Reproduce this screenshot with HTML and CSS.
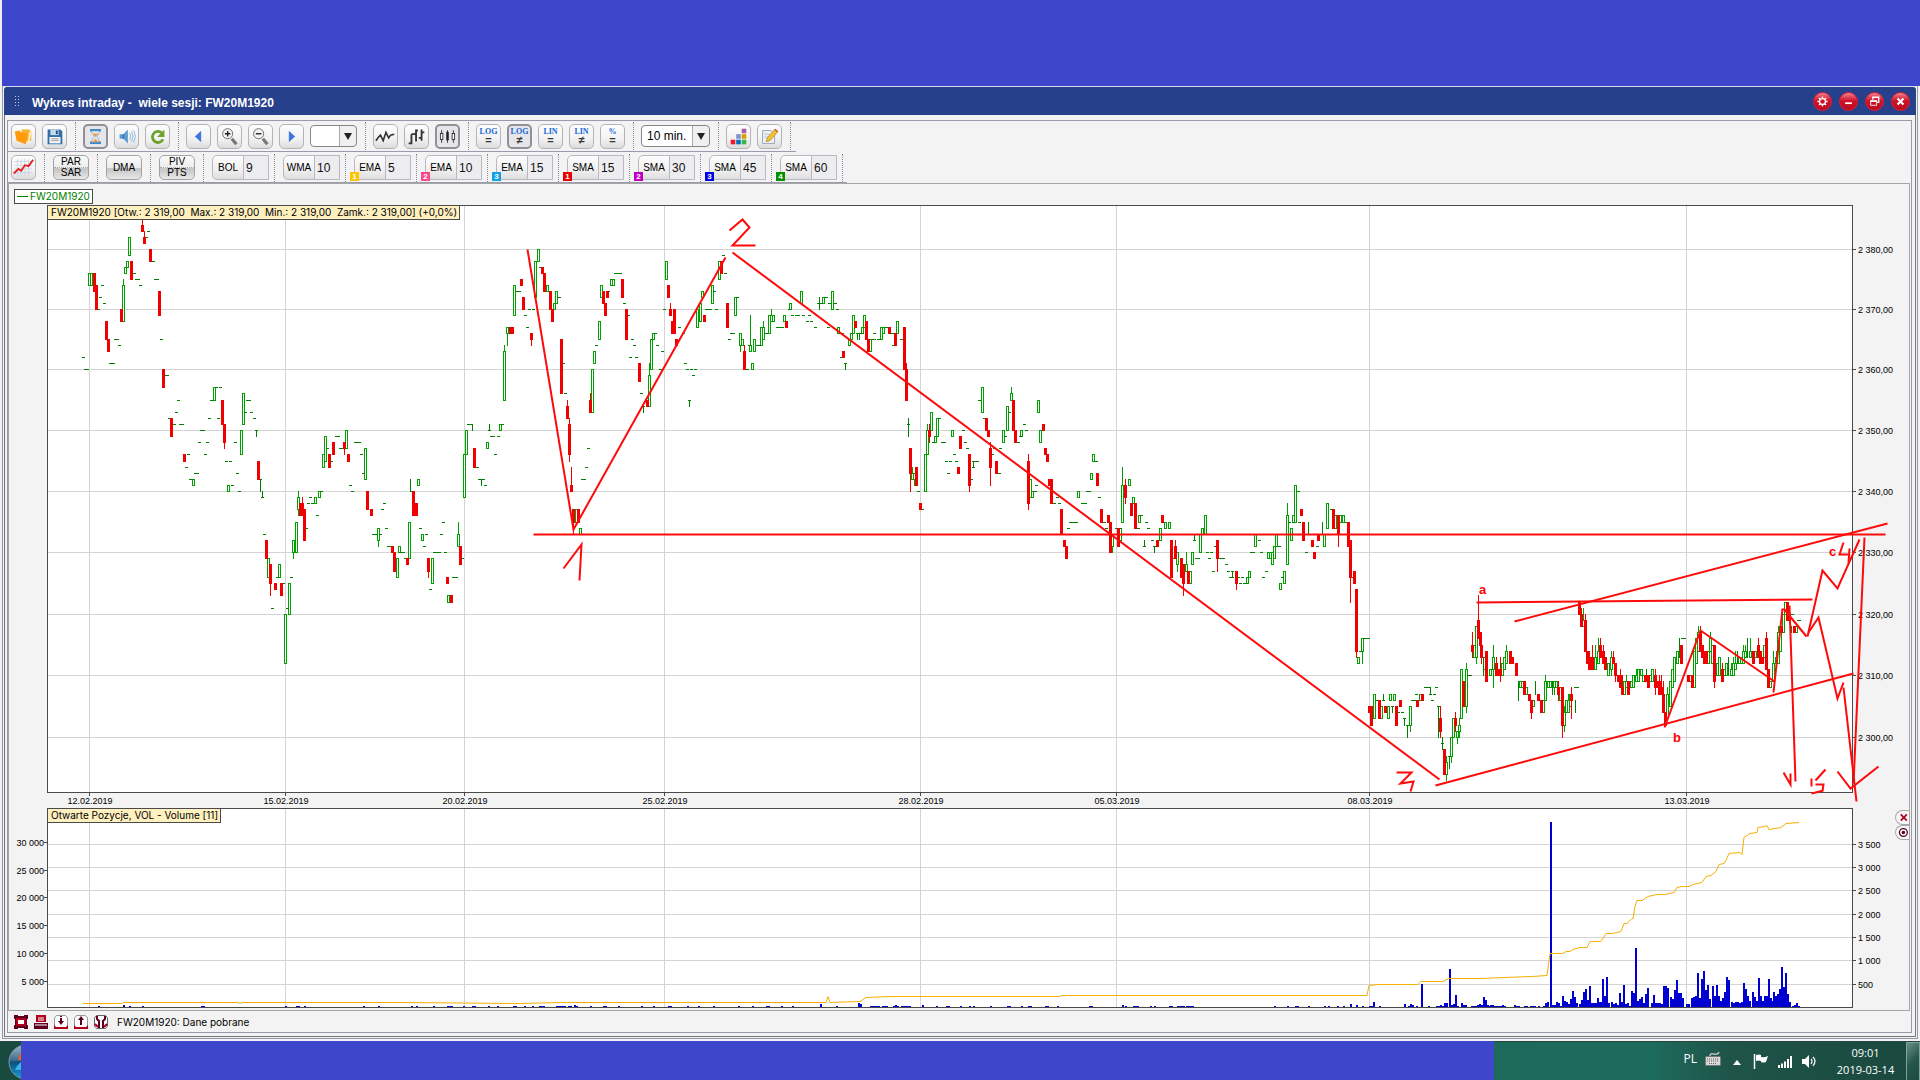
FILE: index.html
```html
<!DOCTYPE html>
<html lang="pl">
<head>
    <meta charset="UTF-8">
    <meta name="viewport" content="width=device-width, initial-scale=1.0">
    <title>Wykres intraday - FW20M1920</title>
    <link rel="stylesheet" href="styles.css">
</head>
<body>
    <div class="banner"></div>

    <main class="window">
        <header class="titlebar">
            <span class="grip"></span>
            <h1 class="title">Wykres intraday -&nbsp; wiele sesji: FW20M1920</h1>
            <button class="round" aria-label="Ustawienia">
                <svg viewBox="0 0 20 20"><circle cx="10" cy="10" r="3.500" fill="none" stroke="#fff" stroke-width="1.500"/><path d="M10 4v3M10 13v3M4 10h3M13 10h3M5.800 5.800l2 2M12.200 12.200l2 2M14.200 5.800l-2 2M7.800 12.200l-2 2" stroke="#fff" stroke-width="1.500"/></svg>
            </button>
            <button class="round" aria-label="Minimalizuj">
                <svg viewBox="0 0 20 20"><path d="M6 12h8" stroke="#fff" stroke-width="2"/></svg>
            </button>
            <button class="round" aria-label="Przywróć">
                <svg viewBox="0 0 20 20"><path d="M8 8V5h7v6h-2" fill="none" stroke="#fff" stroke-width="1.500"/><path d="M5.500 9.500h7v5h-7z" fill="#c8102a" stroke="#fff"/><path d="M5 9.500h8" stroke="#fff" stroke-width="2"/></svg>
            </button>
            <button class="round" aria-label="Zamknij">
                <svg viewBox="0 0 20 20"><path d="M6.500 6.500l7 7M13.500 6.500l-7 7" stroke="#fff" stroke-width="2.500"/></svg>
            </button>
        </header>

        <div class="frame">
            <div class="panel">
                <div class="toolbar">
                    <button class="tool" aria-label="Otwórz">
                        <svg viewBox="0 0 25 25"><path d="M10 5h9l2 3v9l-6 1z" fill="#f7b233"/><path d="M19 7l2 1-2 11-2 1z" fill="#fff3c4"/><path d="M3 7l5-1 2 2 7 1-2 12-10-4z" fill="#ff9a0a"/></svg>
                    </button>
                    <button class="tool" aria-label="Zapisz">
                        <svg viewBox="0 0 25 25"><path d="M5 5h14l2 2v14H5z" fill="#2f6ea8"/><path d="M8 5h9v6H8z" fill="#c5dcee"/><path d="M14 6h2v4h-2z" fill="#244f7b"/><path d="M7 13h12v7H7z" fill="#f4f4f4"/><path d="M9 15h8M9 17h8" stroke="#999"/></svg>
                    </button>
                    <span class="sep"></span>
                    <button class="tool pressed" aria-label="Czas">
                        <svg viewBox="0 0 25 25"><path d="M6 5h13M6 20h13" stroke="#3f86c8" stroke-width="3"/><path d="M8 6h9c0 5-3 5-3 6.500s3 2 3 6.500H8c0-4 3-5 3-6.500S8 11 8 6z" fill="#e4f0f8" stroke="#86a9c6"/><path d="M9 9h7l-3.500 4zM9 19l3.500-4 3.500 4z" fill="#ee9a3a"/></svg>
                    </button>
                    <button class="tool" aria-label="Dźwięk">
                        <svg viewBox="0 0 25 25"><path d="M5 10h4l5-5v15l-5-5H5z" fill="#5e9bd0"/><path d="M9 10v5" stroke="#2c6299"/><path d="M16 9q2 3 0 7M18 7q3 5 0 11M20 6q4 6 0 13" fill="none" stroke="#7db7e2"/></svg>
                    </button>
                    <button class="tool" aria-label="Odśwież">
                        <svg viewBox="0 0 25 25"><path d="M17 8.500a6 6 0 1 0 1.500 7" fill="none" stroke="#6aa22c" stroke-width="3"/><path d="M20 5v8h-8z" fill="#6aa22c"/></svg>
                    </button>
                    <span class="sep"></span>
                    <button class="tool" aria-label="Wstecz">
                        <svg viewBox="0 0 25 25"><path d="M15 7v11l-6-5.500z" fill="#3a76e8" stroke="#1f4cb0" stroke-width=".5"/></svg>
                    </button>
                    <button class="tool" aria-label="Powiększ">
                        <svg viewBox="0 0 25 25"><path d="M15 15l5 6" stroke="#777" stroke-width="3.500"/><circle cx="10.500" cy="9.500" r="5.500" fill="#eef2f5" stroke="#666"/><path d="M7.500 9.500h6M10.500 6.500v6" stroke="#222" stroke-width="1.500"/></svg>
                    </button>
                    <button class="tool" aria-label="Pomniejsz">
                        <svg viewBox="0 0 25 25"><path d="M15 15l5 6" stroke="#777" stroke-width="3.500"/><circle cx="10.500" cy="9.500" r="5.500" fill="#eef2f5" stroke="#666"/><path d="M7.500 9.500h6" stroke="#222" stroke-width="1.500"/></svg>
                    </button>
                    <button class="tool" aria-label="Dalej">
                        <svg viewBox="0 0 25 25"><path d="M10 7v11l6-5.500z" fill="#3a76e8" stroke="#1f4cb0" stroke-width=".5"/></svg>
                    </button>
                    <span class="combo combo-zoom"><select aria-label="Powiększenie"><option></option></select></span>
                    <span class="sep"></span>
                    <button class="tool" aria-label="Liniowy">
                        <svg viewBox="0 0 25 25"><path d="M2 17l3-4 2-2 3 6 3-9 3 6 2-3 4-1" fill="none" stroke="#333" stroke-width="1.800"/></svg>
                    </button>
                    <button class="tool" aria-label="Słupkowy">
                        <svg viewBox="0 0 25 25"><path d="M7 10v11M4 20h3M7 10h2M12 5v13M9 10h3M12 6h2M18 5v12M15 14h3M18 8h3" fill="none" stroke="#333" stroke-width="2"/></svg>
                    </button>
                    <button class="tool pressed" aria-label="Świecowy">
                        <svg viewBox="0 0 25 25"><path d="M5.500 5v15M12.500 5v15M19.500 5v15" stroke="#222"/><rect x="4" y="9" width="3" height="7" fill="#fff" stroke="#222"/><rect x="11" y="7" width="3" height="10" fill="#222"/><rect x="18" y="9" width="3" height="7" fill="#fff" stroke="#222"/></svg>
                    </button>
                    <span class="sep"></span>
                    <button class="tool scale"><b>LOG</b><i>=</i></button>
                    <button class="tool scale pressed"><b>LOG</b><i>≠</i></button>
                    <button class="tool scale"><b>LIN</b><i>=</i></button>
                    <button class="tool scale"><b>LIN</b><i>≠</i></button>
                    <button class="tool scale"><b>%</b><i>=</i></button>
                    <span class="sep"></span>
                    <span class="combo combo-time"><select aria-label="Interwał"><option>10 min.</option></select></span>
                    <span class="sep"></span>
                    <button class="tool" aria-label="Kolory">
                        <svg viewBox="0 0 25 25"><path d="M16 4h5v5h-5z" fill="#a560a5"/><path d="M10 10h5v5h-5z" fill="#8590cf"/><path d="M16 10h5v5h-5z" fill="#d9a000"/><path d="M4 16h5v5H4z" fill="#ed1c24"/><path d="M10 16h5v5h-5z" fill="#0072bc"/><path d="M16 16h5v5h-5z" fill="#39b54a"/></svg>
                    </button>
                    <button class="tool" aria-label="Notatki">
                        <svg viewBox="0 0 25 25"><path d="M5 6h9l4 4v10H5z" fill="#eef1f8" stroke="#98a0ab"/><path d="M7 10h6M7 13h4" stroke="#b9bfc9"/><path d="M9 18l1-4 8-9 3 3-8 9z" fill="#f2c230" stroke="#a57a10" stroke-width=".7"/><path d="M18 5l1-1 3 3-1 1z" fill="#d44"/></svg>
                    </button>
                    <span class="sep"></span>
                </div>

                <div class="toolbar toolbar-ind">
                    <button class="tool" aria-label="Wskaźniki">
                        <svg viewBox="0 0 25 25"><path d="M3 6h19M3 10h19M3 14h19M3 18h19M6 3v19M10 3v19M14 3v19M18 3v19" stroke="#ccd7e6"/><path d="M2 19l5-5 3 2 4-6 4 1 5-7" fill="none" stroke="#e02020" stroke-width="2"/></svg>
                    </button>
                    <span class="sep"></span>
                    <button class="ind two"><span>PAR</span><span>SAR</span></button>
                    <span class="sep"></span>
                    <button class="ind">DMA</button>
                    <span class="sep"></span>
                    <button class="ind two"><span>PIV</span><span>PTS</span></button>
                    <span class="sep"></span>
                    <label class="field"><span class="name">BOL</span><input type="text" value="9"></label>
                    <span class="sep"></span>
                    <label class="field"><span class="name">WMA</span><input type="text" value="10"></label>
                    <span class="sep"></span>
                    <label class="field"><span class="name">EMA</span><input type="text" value="5"><em class="badge yellow">1</em></label>
                    <span class="sep"></span>
                    <label class="field"><span class="name">EMA</span><input type="text" value="10"><em class="badge pink">2</em></label>
                    <span class="sep"></span>
                    <label class="field"><span class="name">EMA</span><input type="text" value="15"><em class="badge cyan">3</em></label>
                    <span class="sep"></span>
                    <label class="field"><span class="name">SMA</span><input type="text" value="15"><em class="badge red">1</em></label>
                    <span class="sep"></span>
                    <label class="field"><span class="name">SMA</span><input type="text" value="30"><em class="badge violet">2</em></label>
                    <span class="sep"></span>
                    <label class="field"><span class="name">SMA</span><input type="text" value="45"><em class="badge blue">3</em></label>
                    <span class="sep"></span>
                    <label class="field"><span class="name">SMA</span><input type="text" value="60"><em class="badge green">4</em></label>
                    <span class="sep"></span>
                </div>

                <div class="chart">
                    <svg id="chart" viewBox="9 184 1900 826"></svg>
                    <div class="legend">FW20M1920</div>
                    <div class="tag tag-price">FW20M1920 [Otw.: 2 319,00&nbsp; Max.: 2 319,00&nbsp; Min.: 2 319,00&nbsp; Zamk.: 2 319,00] (+0,0%)</div>
                    <div class="tag tag-volume">Otwarte Pozycje, VOL - Volume [11]</div>
                    <div class="side">
                        <button aria-label="Zamknij panel"><svg viewBox="0 0 14 15"><path d="M5 4l7 7M12 4l-7 7" stroke="#b0001c" stroke-width="2"/></svg></button>
                        <button aria-label="Opcje panelu"><svg viewBox="0 0 14 15"><circle cx="8" cy="7.500" r="4.500" fill="#fff" stroke="#5c0020" stroke-width="1.500"/><circle cx="8" cy="7.500" r="2" fill="#5c0020"/></svg></button>
                    </div>
                </div>

                <footer class="status">
                    <button aria-label="Pełny ekran"><svg viewBox="0 0 14 14"><path d="M0 0h14v14H0z" fill="#5c0020"/><path d="M4 0h6v1H4zM4 13h6v1H4zM0 4h1v6H0zM13 4h1v6h-1z" fill="#fff"/><path d="M2 3h10v8H2z" fill="#fff"/><path d="M3 4h8v6H3z" fill="#fff" stroke="#b0001c" stroke-width="2"/></svg></button>
                    <button aria-label="Drukuj"><svg viewBox="0 0 14 14"><path d="M2 0h10v7H2z" fill="#b0001c"/><path d="M4 3h6M4 5h6" stroke="#fff"/><path d="M0 8h14v6H0z" fill="#5c0020"/><path d="M1 10h12" stroke="#fff"/></svg></button>
                    <button aria-label="Pobierz"><svg viewBox="0 0 14 14"><path d="M.5 13V3l2-2.500h9l2 2.500v10z" fill="#fff" stroke="#999"/><path d="M0 10l2 2h10l2-2v4H0z" fill="#b0001c"/><path d="M7 1v3" stroke="#5c0020" stroke-width="2" stroke-dasharray="1 1"/><path d="M6 4h2v2h2l-3 4-3-4h2z" fill="#5c0020"/></svg></button>
                    <button aria-label="Wyślij"><svg viewBox="0 0 14 14"><path d="M.5 13V3l2-2.500h9l2 2.500v10z" fill="#fff" stroke="#999"/><path d="M0 10l2 2h10l2-2v4H0z" fill="#b0001c"/><path d="M6 10V5H4l3-4 3 4H8v5z" fill="#5c0020"/></svg></button>
                    <button aria-label="Narzędzia"><svg viewBox="0 0 14 14"><path d="M.5 3l2-2.500h9l2 2.500v8l-2 2.500h-9l-2-2.500z" fill="#fff" stroke="#666"/><path d="M3 1v3l2 2v7M11 1v3L9 6v7" fill="none" stroke="#5c0020" stroke-width="2"/><path d="M1 9l3 3M13 9l-3 3" stroke="#b0001c" stroke-width="2"/></svg></button>
                    <span class="message">FW20M1920: Dane pobrane</span>
                </footer>
            </div>
        </div>
    </main>

    <div class="taskbar">
        <button class="start" aria-label="Start">
            <svg viewBox="0 0 13 40"><defs><linearGradient id="orb" x2="0" y2="1"><stop offset="0" stop-color="#9fb9c9"/><stop offset=".45" stop-color="#3f6a8c"/><stop offset=".5" stop-color="#0d4f7c"/><stop offset="1" stop-color="#18a0dc"/></linearGradient></defs><circle cx="18" cy="20" r="17" fill="url(#orb)" stroke="#7f9ba5"/><path d="M10 18q1-5 3-8v8z" fill="#e8602c"/><path d="M7 28q2-5 6-8v8z" fill="#39b4e6"/></svg>
        </button>
        <div class="tasks"></div>
        <div class="tray">
            <span class="lang">PL</span>
            <svg class="tray-icon tray-keys" viewBox="0 0 16 16"><path d="M5 5q0-3 4-2t5-2" fill="none" stroke="#bbb" stroke-width="1.500"/><rect x=".5" y="5.500" width="15" height="9" rx="1" fill="#d8d8d8" stroke="#777"/><path d="M2 8h12M2 10h12M4 12.500h8" stroke="#666" stroke-dasharray="1 1"/></svg>
            <svg class="tray-up" viewBox="0 0 8 5"><path d="M0 5l4-5 4 5z" fill="#fff"/></svg>
            <svg class="tray-icon" viewBox="0 0 16 16"><path d="M1.500 1v15" stroke="#fff" stroke-width="1.500"/><path d="M3 2q3-1 5 0v2q3 1 7-1l-2 6q-3 1-5 0V8Q5 7 3 8z" fill="#fff"/></svg>
            <svg class="tray-icon" viewBox="0 0 16 16"><path d="M1 12h2v3H1zM4 10.500h2V15H4zM7 8.500h2V15H7zM10 6h2v9h-2zM13 3h2v12h-2z" fill="#fff"/></svg>
            <svg class="tray-icon" viewBox="0 0 16 16"><path d="M1 6h3l4-4v13l-4-4H1z" fill="#fff"/><path d="M10 6q2 2 0 5M12 4q4 4 0 9" fill="none" stroke="#fff" stroke-width="1.200"/></svg>
            <div class="clock"><time>09:01</time><time>2019-03-14</time></div>
        </div>
        <button class="desktop" aria-label="Pokaż pulpit"></button>
    </div>

    <script src="chart.js"></script>
</body>
</html>
```
FILE: styles.css
```css
*{
    box-sizing: border-box;
}

body{
    margin: 0;
    min-height: 100vh;
    display: flex;
    flex-direction: column;
    background: #f3f3f3;
    font-family: "Liberation Sans", Arial, sans-serif;
    font-size: 12px;
    color: #000;
}

button{
    padding: 0;
    border: 0;
    background: none;
    font-family: inherit;
    color: inherit;
}

svg{
    display: block;
}

.banner{
    height: 86px;
    border-left: 2px solid #f0f0f0;
    background: #3e46cc;
}

/* window */

.window{
    flex: 1;
    margin: 0 2px 2px;
    border: 1px solid #8f98a3;
    border-top-color: #d5d7e8;
    padding: 0 1px 1px;
}

.titlebar{
    height: 28px;
    display: flex;
    align-items: center;
    gap: 7px;
    padding: 0 6px 0 10px;
    border-radius: 3px 3px 0 0;
    background: #26408b;
    color: #fff;
}

.grip{
    width: 6px;
    height: 12px;
    background: radial-gradient(circle, #c9d0e6 1px, transparent 1px) 0 0 / 3px 3px;
}

.title{
    flex: 1;
    margin: 0 0 0 5px;
    padding-top: 4px;
    font-size: 12px;
    font-weight: bold;
}

.round{
    width: 19px;
    height: 19px;
    border-radius: 50%;
    border: 1px solid #e01c34;
    background: linear-gradient(#ee8490, #d01228 45%, #b80c22);
}

.frame{
    border: 1px solid #73777e;
    border-top: 0;
    padding: 5px 3px 3px 2px;
}

.panel{
    border: 1px solid #9a9aaa;
}

/* toolbars */

.toolbar{
    width: fit-content;
    height: 31px;
    display: flex;
    align-items: center;
    gap: 6px;
    padding: 0 4px 0 3px;
    border-bottom: 1px solid #9a9aaa;
}

.toolbar-ind{
    gap: 8px;
    padding-top: 1px;
}

.sep{
    height: 28px;
    border-left: 1px dotted #8a8a96;
}

.toolbar .sep{
    margin: 0 1px 0 2px;
}

.toolbar-ind .sep{
    margin: 0;
}

.tool{
    width: 25px;
    height: 25px;
    flex: none;
    border: 1px solid #b4b4b8;
    border-radius: 5px;
    background: linear-gradient(#fdfdfd, #f2f2f2 60%, #dcdcdc);
}

.tool svg{
    width: 23px;
    height: 23px;
}

.pressed{
    border: 2px solid #909096;
    background: #e6e6ea;
}

.tool.pressed svg{
    width: 21px;
    height: 21px;
}

.scale{
    display: flex;
    flex-direction: column;
    align-items: center;
    justify-content: center;
}

.scale b{
    font: 8px/9px "Liberation Serif", serif;
    color: #1468d8;
    -webkit-text-stroke: 1px transparent;
    font-weight: bold;
}

.scale i{
    font: bold 11px/9px "Liberation Sans", Arial, sans-serif;
    color: #333;
}

.combo{
    position: relative;
    height: 22px;
    border: 1px solid #86868e;
    border-radius: 4px;
    background: linear-gradient(to right, #fff calc(100% - 17px), #a8a8ae calc(100% - 17px), #a8a8ae calc(100% - 16px), #f0f0f0 calc(100% - 16px));
}

.combo::after{
    content: "";
    position: absolute;
    right: 4px;
    top: 7px;
    border: 4px solid transparent;
    border-top: 7px solid #222;
    border-bottom: 0;
    pointer-events: none;
}

.combo select{
    width: 100%;
    height: 100%;
    padding: 0 0 0 5px;
    appearance: none;
    border: 0;
    background: none;
    font: 12px "Liberation Sans", Arial, sans-serif;
}

.combo-zoom{
    width: 47px;
}

.combo-time{
    width: 69px;
}

.ind{
    width: 36px;
    height: 25px;
    border: 1px solid #a4a4a8;
    border-radius: 5px;
    background: linear-gradient(#fafafa, #ececec 50%, #c4c4c4 55%, #e8e8e8);
    font-size: 10px;
    line-height: 10px;
}

.two span{
    display: block;
}

.two span + span{
    border-top: 1px dotted #aaa;
}

.field{
    position: relative;
    width: 57px;
    height: 25px;
    margin-right: -3px;
    display: flex;
    border: 1px solid #b8b8c4;
    border-radius: 5px 0 0 5px;
    background: linear-gradient(#fdfdfd, #f0f0f0 60%, #dedede);
}

.name{
    width: 30px;
    text-align: center;
    font-size: 10px;
    line-height: 24px;
}

.field input{
    width: 25px;
    min-width: 0;
    padding: 0 0 0 2px;
    border: 0;
    border-left: 1px solid #b8b8c4;
    background: #ededf0;
    font: 12px "Liberation Sans", Arial, sans-serif;
    color: #111;
}

.badge{
    position: absolute;
    left: -5px;
    bottom: -2px;
    width: 9px;
    height: 9px;
    font: bold 8px/9px "Liberation Sans", Arial, sans-serif;
    text-align: center;
    color: #fff;
}

.yellow{ background: #fdc500; }
.pink{ background: #fa4a8a; }
.cyan{ background: #14a0e6; }
.red{ background: #e60000; }
.violet{ background: #c000c0; }
.blue{ background: #0000e6; }
.green{ background: #009000; }

/* chart */

.chart{
    position: relative;
    margin-right: 1px;
    border: 1px solid #a6a6a6;
}

#chart{
    width: 100%;
    height: auto;
}

.legend,
.tag{
    position: absolute;
    border: 1px solid #4a4a4a;
    font-family: Inter, "Liberation Sans", sans-serif;
    font-size: 10px;
    line-height: 13px;
    white-space: nowrap;
}

.legend{
    left: 5px;
    top: 5px;
    padding: 0 2px;
    display: flex;
    align-items: center;
    gap: 2px;
    background: #fff;
    color: #008000;
}

.legend::before{
    content: "";
    width: 11px;
    border-top: 1px solid #008000;
}

.tag{
    left: 38px;
    padding: 0 2px 0 3px;
    background: #fff0c0;
}

.tag-price{
    top: 21px;
}

.tag-volume{
    top: 624px;
}

.side{
    position: absolute;
    right: 0;
    top: 626px;
    display: flex;
    flex-direction: column;
}

.side button{
    width: 14px;
    height: 15px;
    border: 1px solid #aaa;
    border-right: 0;
    border-radius: 8px 0 0 8px;
    background: #f8f8f8;
}

.side svg{
    width: 13px;
    height: 13px;
}

.axis{
    font-size: 9px;
    fill: #000;
}

.mark{
    font: bold 13px "Liberation Sans", Arial, sans-serif;
    fill: #ff0000;
}

.status{
    height: 21px;
    display: flex;
    align-items: center;
    gap: 6px;
    padding-left: 6px;
}

.status svg{
    width: 14px;
    height: 14px;
}

.message{
    margin-left: 3px;
    font-family: Inter, "Liberation Sans", sans-serif;
    font-size: 10px;
}

/* taskbar */

.taskbar{
    height: 41px;
    display: flex;
    border-top: 1px solid #27463f;
    background: linear-gradient(to right, #184a3f 0, #1d6b5c 82%, #1d6b5c 86%, #1f5449 90%, #1a483e);
    color: #fff;
    font-family: "Open Sans", "Noto Sans", sans-serif;
}

.start{
    width: 21px;
    padding-left: 8px;
    flex: none;
}

.start svg{
    width: 13px;
    height: 40px;
}

.tasks{
    flex: 1;
    margin-top: -1px;
    background: #3e46cc;
}

.tray{
    width: 412px;
    display: flex;
    align-items: center;
    justify-content: flex-end;
    gap: 8px;
    padding-bottom: 3px;
}

.lang{
    font-size: 12px;
    padding-bottom: 4px;
}

.tray-icon{
    width: 16px;
    height: 16px;
}

.tray-keys{
    margin-bottom: 4px;
}

.tray-up{
    width: 8px;
    height: 5px;
    margin: 4px 4px 0 4px;
}

.clock{
    width: 81px;
    display: flex;
    flex-direction: column;
    align-items: center;
    font-size: 11px;
    line-height: 17px;
}

.desktop{
    width: 14px;
    border: 1px solid #7fa39a;
    background: linear-gradient(135deg, #6b8f87, #24564b 50%, #1c4a40);
}
```
FILE: chart.js
```js
const SVG = "http://www.w3.org/2000/svg";
const chart = document.querySelector("#chart");

const GREEN = "#00a000";
const DARK = "#008000";
const RED = "#f00000";
const BORDER = "#4a4a4a";

const LEFT = 47, RIGHT = 1852;

// y of 2300, 2310 ... 2380 (log scale)
const levels = [737, 675, 614, 552, 491, 430, 369, 309, 249];
const days = [[89, "12.02.2019"], [285, "15.02.2019"], [464, "20.02.2019"], [664, "25.02.2019"], [920, "28.02.2019"], [1116, "05.03.2019"], [1369, "08.03.2019"], [1686, "13.03.2019"]];
const volLeft = [[842, "30 000"], [870, "25 000"], [897, "20 000"], [925, "15 000"], [953, "10 000"], [981, "5 000"]];
const volRight = [[844, "3 500"], [867, "3 000"], [890, "2 500"], [914, "2 000"], [937, "1 500"], [960, "1 000"], [984, "500"]];

// all prices below are points above 2300
const y = (p) => {
    const i = Math.max(0, Math.min(7, Math.floor(p / 10)));
    return Math.round(levels[i] + (levels[i + 1] - levels[i]) * (p / 10 - i));
};

const add = (name, attrs, text) => {
    const el = document.createElementNS(SVG, name);
    for (const key in attrs) el.setAttribute(key, attrs[key]);
    if (text) el.textContent = text;
    chart.appendChild(el);
    return el;
};

const box = (x, top, w, h, fill) => add("rect", { x, y: top, width: w, height: h, fill });
const label = (x, ly, text, anchor) => add("text", { x, y: ly, "text-anchor": anchor, class: "axis" }, text);

// [x, price, width]
const ticks = [
    [82,62],[84,60,5],[99,72],[101,74],[103,71],[97,70],[109,61,6],[114,65,5],[118,64],[133,76],[135,75,5],[139,74],[145,82],[147,83],[152,78],[154,75,5],[160,65],[164,59,5],[168,52],[173,51],[177,55],[175,53],[179,51,5],[187,46],[185,44],[189,42],[194,43,5],[198,48],[200,50,5],[204,46],[206,48],[208,52],[210,55],[215,57,3],[219,57],[217,52],[225,45],[229,45],[231,41],[234,48],[236,43],[238,40],[244,53],[246,55,5],[250,53],[253,52],[255,50],[259,42],[261,39],[263,33],[271,21],[276,26],[282,25],[286,21],[290,26],[305,34],[307,38],[309,39],[311,38],[316,36],[320,40],[326,47],[330,45],[335,49,5],[339,47,5],[349,41],[351,40],[354,48,7],[360,46],[362,43],[381,37],[383,38],[385,34],[372,33,5],[379,33],[387,31,5],[400,30,5],[404,29],[410,40],[419,34],[425,33],[423,31],[429,24],[433,30,8],[444,30],[440,33],[442,35],[452,26,6],[461,29],[467,51,5],[476,44],
    [478,42,7],[484,41],[488,50],[490,49,5],[497,49],[494,46],[501,51],[516,73,5],[524,69],[528,70],[532,70],[526,67],[539,77],[558,72],[562,61],[564,56],[581,42,5],[585,44],[587,47],[595,64],[607,73],[614,76,8],[623,71],[627,69],[631,65],[633,64],[629,62],[635,62],[640,56],[642,54],[654,66],[656,64],[661,63],[659,60],[663,70],[678,67],[682,66],[684,61],[686,60],[690,60],[694,60],[692,59],[688,55],[705,70,7],[715,70],[713,73],[722,79],[724,76],[736,72],[728,65],[730,66,5],[746,60],[748,64],[756,64,5],[765,66],[776,67,8],[788,70],[791,69],[795,69,5],[802,69],[808,69],[806,68],[810,68],[814,67],[817,71,5],[825,72],[828,71],[834,71],[836,70],[827,67],[841,66],[840,62],[844,61],[856,66,8],[873,66],[872,65,4],[877,65,5],[885,67],[891,66],[892,64],[900,65],[907,51],[917,40],[921,37],
    [932,48],[938,52],[941,48,5],[945,45],[949,45],[955,45],[947,43],[953,46],[962,50],[964,48],[966,47],[970,42],[972,45,7],[972,44],[978,55],[983,52],[991,46],[993,47],[999,47],[998,43],[1004,49],[1008,53],[1017,48],[1019,49],[1023,51],[1025,50],[1034,40],[1035,41],[1053,38],[1056,39],[1058,38],[1067,34],[1069,35,9],[1081,38,6],[1086,40,5],[1095,45],[1098,39],[1103,35],[1105,34],[1115,34,7],[1137,34],[1140,36],[1145,35],[1147,34],[1143,31],[1151,32],[1153,31],[1172,29],[1195,29,5],[1193,32],[1206,30],[1210,30],[1208,29],[1212,27],[1214,31],[1218,29,7],[1225,28],[1227,27],[1229,26,5],[1231,27],[1237,26],[1241,26],[1239,25],[1243,25,5],[1250,30,5],[1258,32],[1260,30],[1262,26],[1265,27],[1278,31],[1281,26],[1288,35],[1297,40],[1298,35],[1305,30],[1316,31],[1330,37,4],[1345,35],[1352,26],[1359,14],[1363,16,7],
    [1375,6],[1382,6],[1391,5],[1397,4],[1401,4],[1403,3],[1406,2],[1411,6,6],[1415,7],[1424,8,6],[1429,7],[1433,7],[1431,6],[1435,8],[1437,5],[1441,-1],[1448,-3],[1467,10,5],[1574,8,5],[1681,16,5],[1789,20,5],[1797,19,4]
];

// lone wicks [x, high, low]
const wicks = [
    [256,50,49],[260,42,40],[262,40,39],[410,42,40],[472,51,50],[481,42,41],[489,51,50],[643,54,53],[689,55,54],[819,72,70],[845,61,60],[857,66,65],[859,66,65],[908,52,49],[973,45,44],[1144,32,31],[1154,31,30],[1194,33,32],[1232,27,26],[1308,35,33],[1322,35,33],[1361,15,14],[1383,7,6],[1392,5,4],[1404,3,2],[1407,2,0],[1430,8,7],[1438,5,0],[1442,0,-2],[1449,-3,-5],[1483,13,10],[1518,9,6],[1535,9,7],[1552,9,7],[1575,6,4],[1646,11,9],[1679,16,13],[1728,13,10],[1737,14,12],[1747,16,13],[1791,18,17]
];

// [x, body top, body bottom, high, low]
const rising = [
    [89,76,74],[91,76,74],[129,82,79],[125,77,76],[127,78,77],[123,74,68,75],[193,42,41],[214,57,55],[241,50,46],[243,56,51],[228,41,40],[268,29,26],[279,28,26],[285,20,12],[289,25,20],[293,32,30,32,29],[296,35,30],[298,39,37,40,36],[315,39,38],[319,40,39],[323,46,44],[325,49,45],[346,50,47],[365,47,42],[378,34,32,34,31],[397,29,26],[399,31,30],[409,35,29],[418,42,41],[422,33,32],[432,29,25],[448,23,22],[458,33,31,35],[464,46,39],[466,50,46],
    [487,48,47],[500,51,50],[504,63,55,64],[507,67,66,67,64],[514,74,69],[535,78,72],[538,80,78],[547,74,73],[554,71,70],[556,73,71],[576,37,35],[580,34,33],[592,60,53],[594,63,61],[599,68,65],[601,74,72],[611,75,74],[613,75,74],[649,59,54,61],[651,65,60],[653,66,65],[666,78,75],[697,70,67],[700,71,68],[702,73,72],[712,74,71],[719,78,75],[735,72,69],[740,66,64,66,63],[742,65,64],[750,64,63,69],[752,61,60],[754,65,63],[761,67,64],[763,67,65,68],[769,69,66],[771,69,68,70],[773,69,68],[784,69,68],[790,71,70],[801,73,71],[823,72,71],[832,73,70],[838,67,66],[849,65,64],[851,66,65],[853,69,66],[862,67,66],[864,69,67],[870,65,63],[881,67,65],[883,67,66],[897,68,66],[912,43,42,44],[914,43,42,43,41],
    [925,46,40],[927,50,46,51],[931,53,50],[935,49,48],[937,52,49],[952,50,49],[982,57,53],[1003,50,48],[1007,54,50],[1011,56,55,57],[1021,50,49],[1038,55,53],[1040,50,48],[1030,42,39],[1032,40,39],[1078,40,39],[1091,43,42],[1093,46,45],[1112,33,31,33,30],[1120,34,32],[1122,41,35,44],[1129,42,41],[1133,39,38],[1139,36,35],[1160,34,32],[1165,35,34],[1169,35,34],[1177,30,28,30,27],[1186,28,27,30],[1190,27,25],[1192,30,28],[1200,33,30],[1202,34,33],[1205,36,33],[1247,26,25],[1249,27,26],[1255,33,31],[1268,30,29],[1270,30,29],[1272,30,28],[1274,31,29],[1276,33,31],[1280,25,24],[1284,27,25],[1287,36,28,38],[1291,34,32],[1293,36,35],[1295,41,35],[1324,33,31],[1327,38,34],[1335,36,34],[1340,36,35],[1343,36,35],[1358,13,12],[1362,16,14,16,12],
    [1374,7,3],[1381,5,3],[1388,5,3],[1390,7,6],[1394,7,6],[1410,5,2,5,1],[1420,7,6],[1446,-4,-6,-3,-7],[1451,0,-3,0,-4],[1453,3,0],[1457,1,0,1,-1],[1459,2,1,3,0],[1461,11,3],[1466,11,5,12,4],[1474,15,13],[1476,18,13,18,12],[1484,13,11],[1490,11,10],[1493,13,11,15,8],[1502,12,10],[1504,13,11],[1506,14,12,15],[1520,9,8],[1522,9,8],[1526,8,7],[1533,6,5],[1543,6,4],[1545,9,6,10],[1548,9,8],[1550,9,8],[1554,9,8,9,7],[1556,9,8],[1560,8,6],[1564,4,2,5,1],[1566,6,4],[1568,6,4,7],[1570,7,5],
    [1583,19,18,21],[1595,13,11,15],[1598,14,12,16],[1608,12,10],[1611,13,11,14,10],[1624,9,7],[1626,9,8,10],[1631,9,8],[1633,10,8],[1636,10,9,11],[1638,11,9],[1641,11,10],[1643,10,9],[1650,10,9],[1652,11,9],[1667,7,3,8],[1670,9,5],[1672,11,8],[1674,13,9],[1677,14,12],[1690,10,9],[1694,14,8],[1696,16,12],[1698,17,14,18],[1708,14,12],[1710,16,14,17],[1712,15,12],[1717,12,10],[1719,13,10],[1724,11,10],[1726,12,10],[1731,11,10,12],[1733,12,10,13],[1735,12,11,14],[1739,13,12],[1741,13,12],[1743,14,12,15],[1745,14,13,15],[1750,14,13,16],[1755,14,13],[1764,15,13],[1770,9,8],[1773,12,9,14],[1776,13,12,14],[1778,17,12,18],[1780,18,14],[1783,20,17],[1785,22,20],[1796,18,17]
];

const falling = [
    [94,76,73],[96,74,70],[106,68,65],[108,65,63],[121,70,68],[131,78,75],[142,84,83,85],[144,82,81,83],[150,80,78],[159,73,69],[163,60,57],[171,52,49],[184,46,45],[222,55,51],[224,51,48,51,47],[258,45,42],[266,32,29],[270,28,25,28,23],[275,25,24],[281,25,23],[300,38,36],[302,38,36,39],[304,37,32],[329,46,44],[333,48,46],[344,48,47,48,46],[348,46,45],[367,40,37],[371,37,36],[392,31,30],[394,30,27],[407,29,28],[413,40,36],[416,38,36],[428,29,27,29,26],[447,26,25],[451,23,22],[460,31,28],[474,47,44],
    [510,67,66],[512,67,66],[521,75,74],[523,72,70],[531,66,65,66,64],[542,77,76],[544,76,73],[550,73,70],[552,70,68],[561,65,56],[567,54,52,55],[569,51,46,52,45],[571,41,40,44],[573,37,35,37,33],[578,37,35],[590,55,53,56],[603,73,71],[605,71,69],[607,73,72],[622,75,72],[626,70,65],[639,61,58],[647,55,54],[668,74,72],[670,70,69,71],[672,68,66],[674,70,66],[676,65,64],[704,69,68],[721,78,76],[727,71,67],[744,63,60,64],[786,68,67],[843,63,62],[855,68,67],[866,68,65],[868,65,63],[889,67,66],[895,66,64],[904,67,60],[906,60,55,61],[910,47,43,47,40],[916,44,41],[920,38,37],
    [929,50,49,51,48],[958,44,43],[960,49,47],[969,46,41,46,40],[986,52,50],[988,50,49],[990,47,44,48,41],[996,45,43],[1013,55,50],[1015,50,48],[1043,51,50],[1045,47,46],[1047,46,45],[1028,45,38,46,37],[1049,42,41],[1051,42,38],[1061,37,33],[1064,32,31],[1066,31,29],[1097,43,41],[1101,37,35],[1108,36,35],[1110,35,30],[1118,34,31],[1125,41,39,42,38],[1131,38,36],[1135,38,34],[1157,32,31],[1162,36,35],[1171,32,26],[1175,31,29,32],[1181,29,26],[1183,28,25,28,23],[1188,27,25],[1217,32,29,32,27],[1236,27,25,27,24],[1301,37,36],[1303,35,32],[1312,32,31],[1314,30,29],[1318,33,32],[1333,37,34],[1338,36,33,36,31],[1348,35,31],[1350,32,26,32,22],[1354,27,25],[1356,24,14,24,13],
    [1369,5,4],[1371,5,2],[1379,6,3],[1385,5,4],[1396,5,2],[1400,6,5],[1417,6,5],[1422,7,6],[1440,3,1,5,0],[1444,-2,-6],[1455,3,2,4,1],[1463,9,5],[1472,15,14,17,13],[1478,19,16,23,16],[1480,17,15],[1481,15,13,15,12],[1486,14,9],[1496,12,10,13],[1498,11,10],[1500,11,10,13,9],[1510,14,12],[1512,13,12],[1516,12,10],[1524,9,7],[1529,7,6],[1531,6,4,6,3],[1538,7,6],[1541,6,4],[1558,8,7,9,6],[1562,8,2,8,0],[1571,7,6,8,3],
    [1579,22,20],[1581,20,18,21],[1585,19,14,20],[1587,14,12],[1589,13,11,14],[1592,13,11,15],[1600,15,13,16],[1603,14,12,15],[1605,13,11],[1613,13,12,14],[1615,12,10,12,9],[1618,10,9],[1620,10,8,11],[1622,8,7,10],[1628,9,7,9,7],[1645,10,9],[1648,10,8],[1655,10,8,11,7],[1657,9,8],[1659,9,7,10],[1661,8,7,10],[1663,7,4,9],[1665,4,2],[1681,15,12],[1688,10,9],[1692,10,8],[1700,17,14,18],[1702,15,13],[1704,14,12],[1706,14,12],[1714,15,9,15,8],[1722,11,9,12],[1753,14,12],[1758,15,13,16],[1760,14,12],[1762,13,12],[1766,16,11,17],[1768,11,8],[1781,18,17],[1787,22,19],[1794,18,17]
];

// hand-drawn wave count
const lines = [
    "527,249 573,529 725,257", "533,534 1885,534", "732,252 1439,779",
    "1435,785 1853,673", "1514,621 1887,523", "1476,602 1812,599",
    "1664,727 1700,630 1774,681", "1773,692 1782,608", "1783,608 1806,636",
    "1807,636 1822,570 1837,588 1859,539", "1808,632 1818,617 1837,698 1843,682",
    "1843,687 1856,801", "1864,537 1853,783", "1837,771 1850,788 1878,766",
    "1789,605 1795,781", "1783,772 1790,784 1790,773",
    "1811,778 1811,786", "1825,769 1815,780", "1815,784 1823,784 1822,790", "1811,793 1823,790",
    "1843,542 1839,554 1848,554", "1849,548 1848,563",
    "729,230 742,219 749,227 732,245 755,245", "563,568 581,544 579,580",
    "1396,772 1411,772 1400,783 1413,781 1410,791"
];

// volume: [start x, heights every 2px]
const volume = [
    [98,1],[123,2],[129,1],[142,1],[201,1,1],[285,1],[296,1,1],[304,1],[363,1],[378,1],[411,1],[416,1],[433,1],[447,1,1,1],[463,1],[472,1,1],[488,1],[497,1],[513,1,1],[524,1],[532,1],[539,1,1,1],[556,1,1,1,1,1,0,1,1],[574,2,1],[590,1],[603,1,1],[618,1],[641,1],[653,1],[668,1,1],[687,1],[698,1],[713,1],[738,1],[752,1],[766,1,1],[781,1],[792,1],[820,3],[836,1],[858,4,3],[870,1,1,1,1,1,0,1,1,1],[893,1,2,1,0,1,1,1,1,1],[922,2],[936,1],[946,1,1],
    [960,1],[969,1],[973,1],[990,1],[1007,1,1],[1021,1],[1028,1,1],[1045,1,1],[1057,1],[1089,1,1],[1122,2],[1125,1],[1133,1,1,1],[1150,1],[1154,1],[1169,1,1],[1177,1,1,1,1],[1186,1,1,1,1],[1274,1],[1287,1],[1295,1,1],[1308,1],[1324,1],[1328,1],[1337,1],[1343,1],[1350,3],[1356,2],[1362,1],[1369,1,1,5],[1379,1],[1404,3,0,1,3,2,0,1],[1421,23],[1428,1],[1436,1,1,2,1,4,4],[1449,38,2,3,12,1],[1461,4,2,2,0],
    [1471,1,1,1,2,3,2,10,7,2],[1488,1,2,2,1,1,1,1,2,1],[1514,2,1,1],[1524,1,1,0,1,1,1,0,1],[1543,1,4,5],[1550,185,2,2,5,4,1,1],[1562,11,6,5,3,8,16,10,4],[1579,3,7,15,18,7,21,4,4,4,9,5,5,6],[1602,28,11,30,4],[1611,5,3,4,2,14,5],[1623,22,3,4,1,16,14,59,6,8,10,4,13,19],[1651,4,12,4,4,4,3,21,21,19],[1670,10,8,17,27,14,14,9],[1686,3,3],[1691,9,10,11,34,9,28,36,17,22,8],[1712,21,11,22,11,6,9,15,30,27],[1731,5,4,5,5,4,5,24,18,11,6],[1752,15,10,6,29,11,6,11,11,28,9,6],[1773,15,11,13,18,40,20,34,13,5],[1792,1,2,4,1]
];

const openInterest = "83,1003 122,1003 123,1002 238,1002 240,1003 242,1002 400,1002 520,1003 560,1002 826,1002 828,996 830,1002 860,1001 866,997 890,996 965,996 1060,996 1061,995 1367,995 1369,985 1378,984 1418,984 1421,981 1443,981 1449,978 1482,978 1504,977 1532,976 1547,975 1550,953 1563,953 1566,951 1570,951 1573,949 1580,947 1587,947 1590,941 1601,941 1606,933 1613,933 1621,931 1624,923 1627,923 1632,918 1633,918 1635,906 1637,900 1642,900 1648,896 1657,894 1665,894 1674,892 1677,887 1682,886 1689,886 1693,884 1702,882 1706,876 1711,875 1716,871 1719,864 1724,863 1726,860 1729,853 1740,852 1742,854 1744,837 1750,833 1757,832 1758,827 1765,826 1767,825 1769,829 1781,827 1786,823 1799,822";

const drawGrid = () => {
    box(LEFT, 205, RIGHT - LEFT, 587, "#fff");
    box(LEFT, 808, RIGHT - LEFT, 199, "#fff");
    levels.forEach((ly, i) => {
        box(LEFT, ly, RIGHT - LEFT, 1, "#d4d4d4");
        box(RIGHT, ly, 4, 1, BORDER);
        label(1858, ly + 4, `2 3${i}0,00`, "start");
    });
    volRight.forEach(([ly, text]) => {
        box(LEFT, ly, RIGHT - LEFT, 1, "#d4d4d4");
        box(RIGHT, ly, 4, 1, BORDER);
        label(1858, ly + 4, text, "start");
    });
    volLeft.forEach(([ly, text]) => {
        box(LEFT - 3, ly, 3, 1, BORDER);
        label(44, ly + 4, text, "end");
    });
    days.forEach(([x, text]) => {
        box(x, 205, 1, 587, "#d4d4d4");
        box(x, 808, 1, 199, "#d4d4d4");
        box(x, 792, 1, 4, BORDER);
        label(x + 1, 804, text, "middle");
    });
};

const drawBorders = () => {
    add("rect", { x: 47.5, y: 205.5, width: 1805, height: 587, fill: "none", stroke: BORDER });
    add("rect", { x: 47.5, y: 808.5, width: 1805, height: 199, fill: "none", stroke: BORDER });
};

const drawCandles = () => {
    rising.forEach(([x, top, bottom, high = top, low = bottom]) => {
        box(x, y(high), 1, y(low) - y(high) + 1, GREEN);
        add("rect", { x: x - 0.5, y: y(top) + 0.5, width: 2, height: y(bottom) - y(top), fill: "#fff", stroke: GREEN });
    });
    ticks.forEach(([x, p, w = 3]) => box(x, y(p), w, 1, DARK));
    wicks.forEach(([x, high, low]) => box(x, y(high), 1, y(low) - y(high) + 1, DARK));
    falling.forEach(([x, top, bottom, high = top, low = bottom]) => {
        box(x, y(high), 1, y(low) - y(high) + 1, RED);
        box(x - 1, y(top), 3, y(bottom) - y(top) + 1, RED);
    });
};

const drawVolume = () => {
    volume.forEach(([start, ...heights]) => {
        heights.forEach((h, i) => box(start + i * 2, 1007 - h, 2, h, "#0000d0"));
    });
    add("polyline", { points: openInterest, fill: "none", stroke: "#f5b000", transform: "translate(0 .5)" });
};

const drawMarks = () => {
    lines.forEach((points) => add("polyline", { points, fill: "none", stroke: "#ff0a0a", "stroke-width": 2, transform: "translate(.5 .5)" }));
    add("text", { x: 1479, y: 594, class: "mark" }, "a");
    add("text", { x: 1673, y: 742, class: "mark" }, "b");
    add("text", { x: 1829, y: 556, class: "mark" }, "c");
};

drawGrid();
drawCandles();
drawVolume();
drawBorders();
drawMarks();
```
